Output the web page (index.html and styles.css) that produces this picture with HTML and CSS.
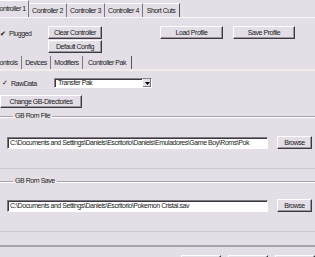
FILE: index.html
```html
<!DOCTYPE html>
<html lang="en">
<head>
    <meta charset="UTF-8">
    <title>Controller Config</title>
    <link rel="stylesheet" href="styles.css">
</head>
<body>
    <div class="dialog">
        <div class="tabs top-tabs">
            <div class="tab first selected">Controller 1</div>
            <div class="tab">Controller 2</div>
            <div class="tab">Controller 3</div>
            <div class="tab">Controller 4</div>
            <div class="tab">Short Cuts</div>
        </div>

        <div class="pane">
            <label class="check plugged"><span class="mark">&#10004;</span>Plugged</label>
            <div class="btn-col">
                <button class="btn clear-btn">Clear Controller</button>
                <button class="btn clear-btn">Default Config</button>
            </div>
            <button class="btn load-btn">Load Profile</button>
            <button class="btn save-btn">Save Profile</button>
        </div>

        <div class="tabs sub-tabs">
            <div class="tab first">Controls</div>
            <div class="tab">Devices</div>
            <div class="tab">Modifiers</div>
            <div class="tab selected">Controller Pak</div>
        </div>

        <div class="pak-row">
            <label class="check raw"><span class="mark">&#10003;</span>RawData</label>
            <div class="select">
                <span class="select-text">Transfer Pak</span>
                <span class="select-btn"><svg width="5" height="3" viewBox="0 0 5 3"><path d="M0 0h5L2.5 3z" fill="#000"/></svg></span>
            </div>
        </div>
        <button class="btn dirs-btn">Change GB-Directories</button>

        <fieldset class="group rom-file">
            <legend>GB Rom File</legend>
            <div class="path-row">
                <div class="path">C:\Documents and Settings\Daniels\Escritorio\Daniels\Emuladores\Game Boy\Roms\Pok</div>
                <button class="btn browse">Browse</button>
            </div>
        </fieldset>

        <fieldset class="group rom-save">
            <legend>GB Rom Save</legend>
            <div class="path-row">
                <div class="path">C:\Documents and Settings\Daniels\Escritorio\Pokemon Cristal.sav</div>
                <button class="btn browse">Browse</button>
            </div>
        </fieldset>

        <div class="footer">
            <button class="btn foot-btn"></button>
            <button class="btn foot-btn"></button>
            <button class="btn foot-btn"></button>
        </div>
    </div>
</body>
</html>
```

FILE: styles.css
```css
body {
    margin: 0;
    background: #e4dee6;
    font-family: "Liberation Sans", Arial, sans-serif;
    font-size: 7px;
    letter-spacing: -0.45px;
    color: #1a1a1a;
    overflow: hidden;
}

.dialog {
    width: 315px;
    height: 257px;
}

/* tab strips */
.tabs {
    display: flex;
    align-items: flex-end;
    border-bottom: 1px solid #fbf7f5;
}

.top-tabs {
    height: 17px;
    margin-left: -8px;
}

.tab {
    height: 14px;
    line-height: 14px;
    padding: 0 3px;
    border-right: 1px solid #7e7882;
    border-top: 1px solid #fff;
    white-space: nowrap;
    box-sizing: border-box;
    text-align: center;
}

.tab.selected {
    height: 17px;
    line-height: 16px;
}

.top-tabs .tab { width: 38px; }
.top-tabs .tab.first { width: 37px; text-align: left; }
.top-tabs .tab:last-child { width: 37px; border-right: 1px solid #555; }

.sub-tabs {
    height: 13px;
    margin-left: -8px;
    border-bottom: 2px solid #f1ebe9;
}

.sub-tabs .tab { height: 13px; line-height: 13px; border-top: 0; }
.sub-tabs .tab.first { width: 30px; text-align: left; }
.sub-tabs .tab:nth-child(2) { width: 29px; }
.sub-tabs .tab:nth-child(3) { width: 32px; }
.sub-tabs .tab.selected { width: 49px; border-right: 1px solid #555; }

/* buttons */
.btn {
    display: block;
    height: 13px;
    padding: 0;
    margin: 0;
    font: inherit;
    letter-spacing: inherit;
    color: inherit;
    background: #e4dee6;
    border: 1px solid;
    border-color: #fff #3c383e #3c383e #fff;
    box-shadow: inset -1px -1px #9d97a0;
    text-align: center;
    line-height: 11px;
    white-space: nowrap;
}

.pane {
    height: 38px;
    display: flex;
    align-items: flex-start;
    padding-top: 8px;
    box-sizing: border-box;
}

.check {
    display: flex;
    align-items: center;
    gap: 3px;
}

.mark {
    font-size: 7px;
    width: 6px;
    color: #111;
}

.plugged {
    width: 48px;
    height: 13px;
    margin-top: 1px;
}

.btn-col {
    display: flex;
    flex-direction: column;
    gap: 1px;
}

.clear-btn { width: 54px; }

.load-btn {
    width: 63px;
    margin-left: 58px;
}

.save-btn {
    width: 62px;
    margin-left: 10px;
}

/* controller pak */
.pak-row {
    display: flex;
    align-items: center;
    margin-top: 7px;
    height: 10px;
}

.raw {
    width: 52px;
    padding-left: 2px;
}

.select {
    width: 98px;
    height: 10px;
    display: flex;
    background: #fff;
    border: 1px solid;
    border-color: #8a848c #fff #fff #8a848c;
    box-sizing: border-box;
    box-shadow: inset 1px 1px #3c383e;
}

.select-text {
    flex: 1;
    line-height: 8px;
    padding-left: 3px;
}

.select-btn {
    width: 8px;
    display: flex;
    align-items: center;
    justify-content: center;
    background: #e4dee6;
    border-left: 1px solid #fff;
    box-shadow: inset -1px -1px #7e7882;
}

.dirs-btn {
    width: 82px;
    margin-top: 7px;
}

/* group boxes */
.group {
    margin: 4px -10px 0 -10px;
    padding: 0 10px;
    border: 0;
    border-top: 1px solid #a8a2aa;
    border-bottom: 1px solid #cdc7cf;
    box-shadow: inset 0 1px #fff;
    min-width: 0;
}

.group legend {
    padding: 0 2px;
    margin-left: 13px;
    line-height: 8px;
}

.rom-file { height: 57px; box-sizing: border-box; }
.rom-save { height: 55px; margin-top: 8px; box-sizing: border-box; }

.path-row {
    display: flex;
    align-items: center;
    padding-left: 7px;
    margin-top: 16px;
}

.rom-save .path-row { margin-top: 14px; }

.path {
    width: 261px;
    height: 12px;
    line-height: 10px;
    padding-left: 2px;
    background: #fff;
    border: 1px solid;
    border-color: #7e7882 #fff #fff #7e7882;
    box-shadow: inset 1px 1px #3c383e;
    box-sizing: border-box;
    white-space: nowrap;
    overflow: hidden;
}

.browse {
    width: 35px;
    margin-left: 9px;
}

/* bottom */
.footer {
    margin-top: 13px;
    border-top: 2px solid #a8a2aa;
    display: flex;
    padding: 8px 0 0 181px;
    gap: 7px;
}

.foot-btn { width: 46px; }
```
